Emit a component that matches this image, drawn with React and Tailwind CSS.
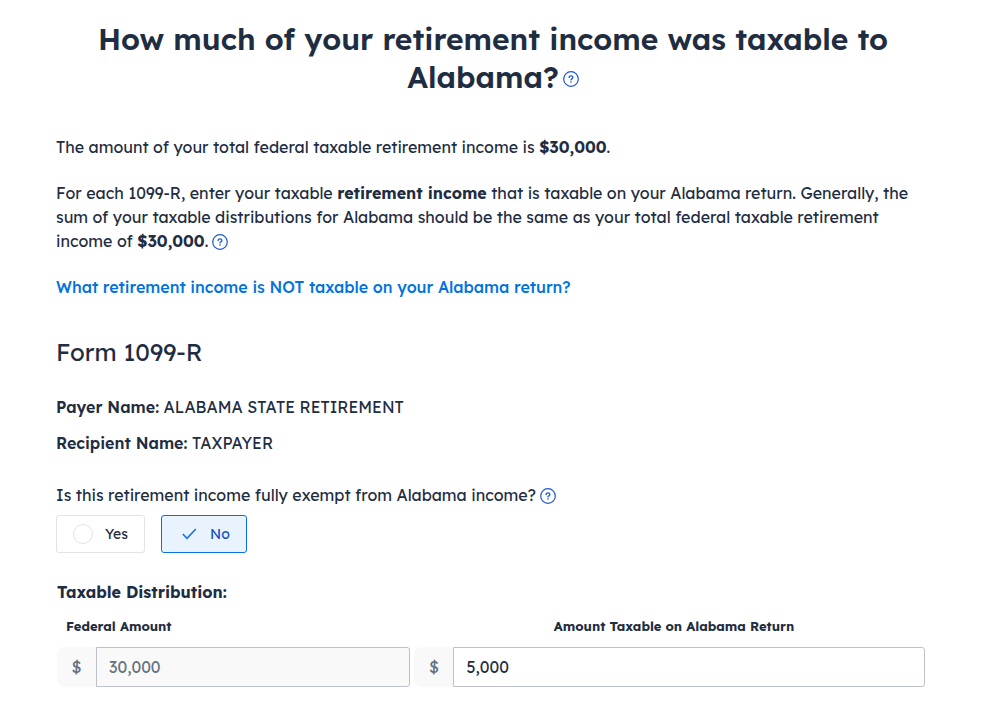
import React, { useState } from 'react';

const HelpButton = ({ label }) => (
  <button type="button" aria-label={label} className="inline-block align-middle ml-1 pb-0.5 text-[#1d58d0]">
    <svg viewBox="0 0 16 16" className="block w-4 h-4" fill="none" stroke="currentColor" strokeLinecap="round">
      <circle cx="8" cy="8" r="7.3" strokeWidth="1.2" />
      <path d="M6.1 6.6C6.1 5.5 7 4.8 8 4.8s1.9.7 1.9 1.7c0 1.3-1.9 1.4-1.9 2.4" strokeWidth="1.3" />
      <circle cx="8" cy="11" r="0.8" fill="currentColor" stroke="none" />
    </svg>
  </button>
);

const ExemptOption = ({ label, value, selected, onSelect }) => (
  <label
    className={`flex items-center gap-3 h-[38px] px-4 rounded-[3px] border text-sm cursor-pointer ${
      selected ? 'bg-[#e9f3fe] border-[#0a70e6] text-[#1150c4]' : 'bg-white border-[#e1e3e8]'
    }`}
  >
    <input
      type="radio"
      name="exempt"
      value={value}
      checked={selected}
      onChange={() => onSelect(value)}
      className="sr-only"
    />
    {selected ? (
      <svg viewBox="0 0 20 20" className="w-5 h-5 text-[#1170e4]" fill="none" stroke="currentColor" strokeWidth="1.5">
        <path d="M4.8 10l4.2 4.3 8.8-9.2" />
      </svg>
    ) : (
      <span className="w-5 h-5 rounded-full border border-[#e1e3e8]" />
    )}
    {label}
  </label>
);

const AmountField = ({ id, ...props }) => (
  <div className="flex">
    <span aria-hidden="true" className="w-[39px] leading-10 text-center rounded-l-lg bg-[#f9f9f9] text-[#66717f]">
      $
    </span>
    <input
      id={id}
      type="text"
      inputMode="decimal"
      className="flex-1 min-w-0 h-10 px-3 rounded-r-[3px] border border-[#bcc1ca] bg-white read-only:bg-[#f9f9f9] read-only:text-[#66717f]"
      {...props}
    />
  </div>
);

const App = () => {
  const [exempt, setExempt] = useState('no');
  const [amount, setAmount] = useState('5,000');

  return (
    <main className="min-h-screen bg-white pl-14 pr-[60px] pt-5 pb-8 font-[Lexend,Inter,sans-serif] text-base leading-6 text-[#1f2d42]">
      <h1 className="text-center text-3xl leading-[38px] font-semibold">
        How much of your retirement income was taxable to Alabama?
        <HelpButton label="About taxable retirement income" />
      </h1>

      <p className="mt-[39px]">
        The amount of your total federal taxable retirement income is <b>$30,000</b>.
      </p>
      <p className="mt-[22px]">
        For each 1099-R, enter your taxable <b>retirement income</b> that is taxable on your Alabama
        return. Generally, the sum of your taxable distributions for Alabama should be the same as
        your total federal taxable retirement income of <b>$30,000</b>.
        <HelpButton label="About taxable distributions" />
      </p>
      <p className="mt-[22px]">
        <a href="#not-taxable" className="font-medium text-[#0073dd]">
          What retirement income is NOT taxable on your Alabama return?
        </a>
      </p>

      <h2 className="mt-9 text-2xl leading-[34px]">Form 1099-R</h2>
      <p className="mt-[26px]">
        <b className="font-semibold">Payer Name:</b> ALABAMA STATE RETIREMENT
      </p>
      <p className="mt-3">
        <b className="font-semibold">Recipient Name:</b> TAXPAYER
      </p>

      <fieldset className="mt-7">
        <legend>
          Is this retirement income fully exempt from Alabama income?
          <HelpButton label="About exempt income" />
        </legend>
        <div className="flex gap-4 mt-2">
          <ExemptOption label="Yes" value="yes" selected={exempt === 'yes'} onSelect={setExempt} />
          <ExemptOption label="No" value="no" selected={exempt === 'no'} onSelect={setExempt} />
        </div>
      </fieldset>

      <section className="mt-[27px] pl-px pr-[5px]">
        <h3 className="font-bold">Taxable Distribution:</h3>
        <div className="flex gap-0.5 mt-3 text-[13px] leading-5 font-bold">
          <label htmlFor="federal-amount" className="w-[57%] pl-[9px]">
            Federal Amount
          </label>
          <label htmlFor="state-amount">Amount Taxable on Alabama Return</label>
        </div>
        <div className="grid grid-cols-[353fr_510fr] gap-1 mt-[11px]">
          <AmountField id="federal-amount" value="30,000" readOnly />
          <AmountField
            id="state-amount"
            value={amount}
            onChange={(e) => setAmount(e.target.value)}
          />
        </div>
      </section>
    </main>
  );
};

export default App;
